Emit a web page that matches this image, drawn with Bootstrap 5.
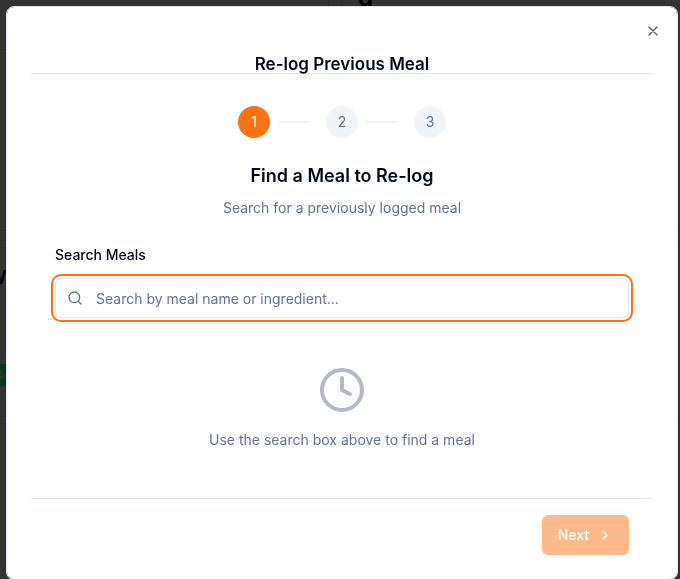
<!DOCTYPE html>
<html lang="en">
<head>
<meta charset="utf-8">
<meta name="viewport" content="width=device-width, initial-scale=1">
<title>Re-log Previous Meal</title>
<link href="https://cdn.jsdelivr.net/npm/bootstrap@5.3.0/dist/css/bootstrap.min.css" rel="stylesheet">
<style>
:root { --ink: #020817; --muted: #64748b; --line: #e2e8f0; --soft: #f1f5f9; --brand: #f97316; --dim: #2d2d2d; }
body { font-family: Inter, "Liberation Sans", sans-serif; font-size: 14px; line-height: 20px; color: #000; background: #333; overflow: hidden; }
.backdrop-page { height: 100vh; overflow: hidden; }
.panel-top { height: 50px; }
.panel-left { width: 329px; border-right: 1px solid var(--dim); border-bottom: 1px solid var(--dim); }
.panel-right { border-left: 1px solid var(--dim); margin-left: 12px; padding-left: 16px; }
.panel-name { margin-top: -12px; font-size: 24px; line-height: 20px; font-weight: 700; }
.panel-middle { height: 181px; border-bottom: 1px solid var(--dim); }
.panel-meals { margin-top: 16px; padding-top: 18px; height: 177px; border: solid var(--dim); border-width: 1px 0; }
.page-heading { margin-left: -12px; font-size: 18px; line-height: 24px; font-weight: 600; }
.page-tag { margin-top: 74px; margin-left: -8px; padding-left: 4px; width: 20px; height: 22px; line-height: 22px; background: #0a3719; color: #333; font-size: 12px; font-weight: 600; }
.meal-dialog { max-width: 672px; margin: 6px 2px 0 6px; }
.meal-box { border: 1px solid var(--line); border-radius: 8px; padding: 24px; color: var(--ink); }
.meal-header { height: 43px; padding-top: 24px; border-bottom: 1px solid var(--line); }
.meal-title { font-size: 17px; line-height: 18px; font-weight: 600; }
.close-btn { top: 16px; right: 16px; color: #5b5f69; line-height: 0; }
.meal-body { padding: 32px 24px 48px; }
.step { width: 32px; height: 32px; background: var(--soft); color: var(--muted); }
.step-on { background: var(--brand); color: #fff; }
.step-line { width: 32px; height: 2px; background: var(--soft); }
.find-title { font-size: 18px; line-height: 28px; font-weight: 600; margin-top: 24px; }
.muted { color: var(--muted); }
.search-label { font-weight: 500; margin-top: 27px; margin-bottom: 13px; }
.search-field { height: 40px; padding: 8px 12px 8px 40px; border: 1px solid var(--line); border-radius: 6px; font-size: 14px; line-height: 20px; }
.search-field:focus, .search-field { box-shadow: 0 0 0 2px #fff, 0 0 0 4px var(--brand); border-color: var(--line); }
.search-field::placeholder { color: var(--muted); }
.search-icon { left: 12px; top: 12px; color: var(--muted); }
.empty-state { margin-top: 48px; }
.empty-state svg { color: #b2bac5; }
.meal-footer { border-top: 1px solid var(--line); padding: 16px 24px 0; }
.next-btn { height: 40px; padding: 8px 16px; border: 0; border-radius: 6px; font-size: 14px; line-height: 20px; font-weight: 500; }
.next-btn:disabled { background: #fcb98b; color: #fff; opacity: 1; }
</style>
</head>
<body>
<div class="backdrop-page" aria-hidden="true">
  <div class="panel-top d-flex">
    <div class="panel-left flex-shrink-0"></div>
    <div class="panel-right flex-grow-1"><div class="panel-name">g</div></div>
  </div>
  <div class="panel-middle"></div>
  <div class="panel-meals">
    <div class="page-heading">W</div>
    <div class="page-tag">&amp;</div>
  </div>
</div>
<div class="modal d-block" role="dialog" aria-modal="true" aria-labelledby="dialogTitle">
  <div class="modal-dialog meal-dialog">
    <div class="modal-content meal-box">
      <button type="button" class="close-btn btn p-0 border-0 position-absolute" aria-label="Close">
        <svg width="16" height="16" viewBox="0 0 24 24" fill="none" stroke="currentColor" stroke-width="2" stroke-linecap="round"><path d="M18 6 6 18M6 6l12 12"/></svg>
      </button>
      <header class="meal-header text-center">
        <h2 id="dialogTitle" class="meal-title mb-0">Re-log Previous Meal</h2>
      </header>
      <div class="meal-body">
        <div class="d-flex justify-content-center align-items-center gap-2">
          <span class="step step-on rounded-circle d-flex align-items-center justify-content-center">1</span>
          <span class="step-line me-2"></span>
          <span class="step rounded-circle d-flex align-items-center justify-content-center">2</span>
          <span class="step-line me-2"></span>
          <span class="step rounded-circle d-flex align-items-center justify-content-center">3</span>
        </div>
        <div class="text-center">
          <h3 class="find-title mb-2">Find a Meal to Re-log</h3>
          <p class="muted mb-0">Search for a previously logged meal</p>
        </div>
        <label class="search-label d-block" for="mealSearch">Search Meals</label>
        <div class="position-relative">
          <svg class="search-icon position-absolute" width="16" height="16" viewBox="0 0 24 24" fill="none" stroke="currentColor" stroke-width="2" stroke-linecap="round"><circle cx="11" cy="11" r="8"/><path d="m21 21-4.3-4.3"/></svg>
          <input id="mealSearch" type="text" class="search-field form-control" placeholder="Search by meal name or ingredient...">
        </div>
        <div class="empty-state text-center">
          <svg class="d-block mx-auto mb-3" width="48" height="48" viewBox="0 0 24 24" fill="none" stroke="currentColor" stroke-width="2" stroke-linecap="round" stroke-linejoin="round"><circle cx="12" cy="12" r="10"/><path d="M12 6v6l4 2"/></svg>
          <p class="muted mb-0">Use the search box above to find a meal</p>
        </div>
      </div>
      <footer class="meal-footer d-flex justify-content-end">
        <button type="button" class="next-btn btn d-flex align-items-center gap-2" disabled>Next
          <svg width="16" height="16" viewBox="0 0 24 24" fill="none" stroke="currentColor" stroke-width="2" stroke-linecap="round" stroke-linejoin="round"><path d="m9 18 6-6-6-6"/></svg>
        </button>
      </footer>
    </div>
  </div>
</div>
<script src="https://cdn.jsdelivr.net/npm/bootstrap@5.3.0/dist/js/bootstrap.bundle.min.js"></script>
</body>
</html>
